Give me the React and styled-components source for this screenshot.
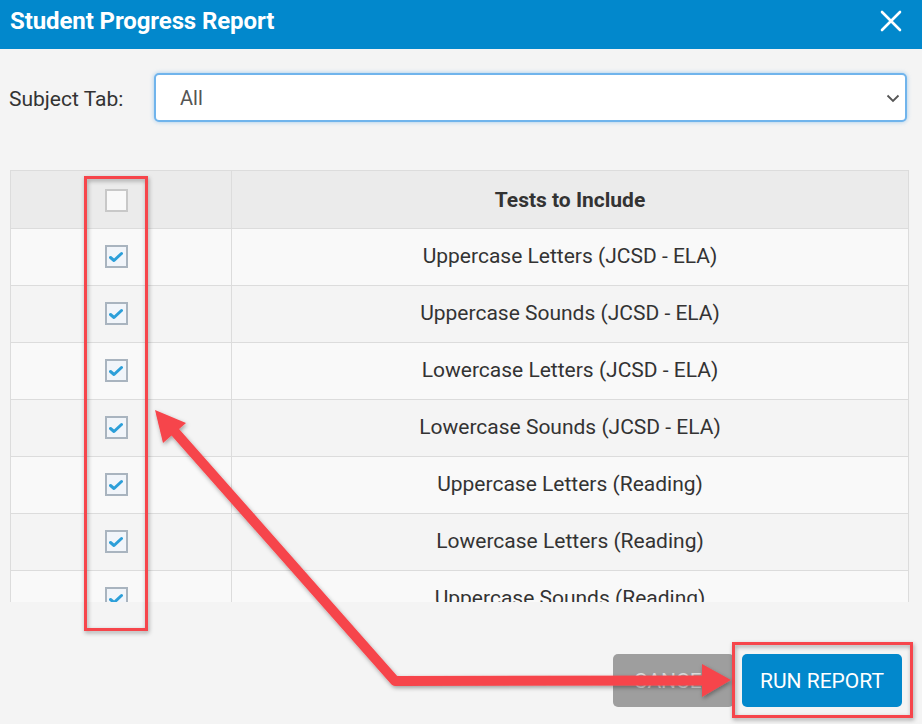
import React, { useState } from "react";
import styled, { createGlobalStyle } from "styled-components";

const GlobalStyle = createGlobalStyle`
  html, body {
    margin: 0;
    padding: 0;
    background: #f4f4f4;
    font-family: Roboto, "Liberation Sans", Arial, sans-serif;
  }
  * { box-sizing: border-box; }
`;

const tests = [
  "Uppercase Letters (JCSD - ELA)",
  "Uppercase Sounds (JCSD - ELA)",
  "Lowercase Letters (JCSD - ELA)",
  "Lowercase Sounds (JCSD - ELA)",
  "Uppercase Letters (Reading)",
  "Lowercase Letters (Reading)",
  "Uppercase Sounds (Reading)",
  "Lowercase Sounds (Reading)",
];

const CheckMark = () => (
  <svg width="14" height="12" viewBox="0 0 14 12">
    <path
      d="M1.5 6.5 L5 9.5 L12.5 2.5"
      fill="none"
      stroke="#2c9fd9"
      strokeWidth="3"
      strokeLinecap="round"
      strokeLinejoin="round"
    />
  </svg>
);

const App = () => {
  const [subject, setSubject] = useState("All");
  const [checked, setChecked] = useState(tests.map(() => true));

  const toggle = (i) => {
    setChecked(checked.map((c, j) => (j === i ? !c : c)));
  };

  return (
    <Page>
      <GlobalStyle />
      <Header>
        <Title>Student Progress Report</Title>
        <CloseButton aria-label="close">
          <svg width="22" height="22" viewBox="0 0 22 22">
            <path
              d="M2 2 L20 20 M20 2 L2 20"
              stroke="#fff"
              strokeWidth="2.6"
              strokeLinecap="round"
            />
          </svg>
        </CloseButton>
      </Header>

      <Body>
        <FilterRow>
          <Label>Subject Tab:</Label>
          <SelectWrap>
            <Select value={subject} onChange={(e) => setSubject(e.target.value)}>
              <option>All</option>
              <option>ELA</option>
              <option>Reading</option>
            </Select>
            <Chevron width="14" height="9" viewBox="0 0 14 9">
              <path
                d="M1.5 1.5 L7 7 L12.5 1.5"
                fill="none"
                stroke="#555"
                strokeWidth="1.8"
              />
            </Chevron>
          </SelectWrap>
        </FilterRow>

        <TableWrap>
          <Table>
            <thead>
              <tr>
                <HeadCell $narrow>
                  <Box $empty />
                </HeadCell>
                <HeadCell>Tests to Include</HeadCell>
              </tr>
            </thead>
            <tbody>
              {tests.map((t, i) => (
                <Row key={t} $odd={i % 2 === 0}>
                  <Cell $narrow>
                    <Box onClick={() => toggle(i)}>{checked[i] && <CheckMark />}</Box>
                  </Cell>
                  <Cell>{t}</Cell>
                </Row>
              ))}
            </tbody>
          </Table>
        </TableWrap>

        <Footer>
          <Button $variant="cancel">CANCEL</Button>
          <Button>RUN REPORT</Button>
        </Footer>
      </Body>

      <Overlay width="922" height="724" viewBox="0 0 922 724">
        <defs>
          <filter id="shadow" x="-10%" y="-10%" width="120%" height="120%">
            <feDropShadow dx="1" dy="2" stdDeviation="2" floodColor="#000" floodOpacity="0.35" />
          </filter>
        </defs>
        <g filter="url(#shadow)" fill="none" stroke="#f6454b" strokeWidth="3">
          <rect x="85.5" y="177.5" width="61" height="452" />
          <rect x="733.5" y="643.5" width="178" height="73" />
        </g>
        <g filter="url(#shadow)">
          <path
            d="M709 680.5 L395 681 L168 424"
            fill="none"
            stroke="#f6454b"
            strokeWidth="10"
            strokeLinecap="round"
            strokeLinejoin="round"
          />
          <polygon points="155,410 186,423 163,443" fill="#f6454b" />
          <polygon points="702,664 731,680 702,697" fill="#f6454b" />
        </g>
      </Overlay>
    </Page>
  );
};

const Page = styled.div`
  position: relative;
  width: 922px;
  height: 724px;
  overflow: hidden;
  background: #f4f4f4;
`;

const Header = styled.header`
  height: 49px;
  background: #0288cc;
  display: flex;
  align-items: center;
  justify-content: space-between;
  padding: 0 20px 0 10px;
`;

const Title = styled.h1`
  margin: 0 0 8px;
  color: #fff;
  font-size: 24px;
  font-weight: 700;
  letter-spacing: -0.1px;
`;

const CloseButton = styled.button`
  border: 0;
  background: none;
  padding: 0;
  margin-bottom: 8px;
  display: flex;
  cursor: pointer;
`;

const Body = styled.main`
  padding: 24px 13px 0 10px;
`;

const FilterRow = styled.div`
  display: flex;
  align-items: center;
`;

const Label = styled.label`
  width: 145px;
  margin-left: -1px;
  font-size: 21px;
  color: #333;
  padding-top: 2px;
`;

const SelectWrap = styled.div`
  position: relative;
  flex: 1;
  margin-right: 2px;
`;

const Select = styled.select`
  appearance: none;
  width: 100%;
  height: 49px;
  padding: 0 24px;
  font-family: inherit;
  font-size: 20px;
  color: #555;
  background: #fff;
  border: 2px solid #70b4ec;
  border-radius: 5px;
  box-shadow: 0 0 4px rgba(102, 175, 233, 0.6);
  outline: none;
`;

const Chevron = styled.svg`
  position: absolute;
  right: 7px;
  top: 21px;
  pointer-events: none;
`;

const TableWrap = styled.div`
  margin-top: 48px;
  height: 432px;
  overflow: hidden;
`;

const Table = styled.table`
  width: 100%;
  border-collapse: collapse;
  border-left: 1px solid #dcdcdc;
  border-right: 1px solid #dcdcdc;
`;

const HeadCell = styled.th`
  height: 58px;
  width: ${(p) => (p.$narrow ? "221px" : "auto")};
  padding: 0 ${(p) => (p.$narrow ? "10px" : "0")} 0 0;
  background: #ebebeb;
  border: 1px solid #dcdcdc;
  font-size: 21px;
  font-weight: 700;
  color: #333;
  text-align: center;
  vertical-align: middle;
`;

const Row = styled.tr`
  background: ${(p) => (p.$odd ? "#f9f9f9" : "#f4f4f4")};
`;

const Cell = styled.td`
  height: 57px;
  padding: 0 ${(p) => (p.$narrow ? "10px" : "0")} 2px 0;
  border: 1px solid #dcdcdc;
  border-top: 0;
  font-size: 21px;
  color: #333;
  text-align: center;
  vertical-align: middle;
`;

const Box = styled.span`
  display: inline-flex;
  align-items: center;
  justify-content: center;
  width: 23px;
  height: 23px;
  vertical-align: middle;
  border: 2px solid ${(p) => (p.$empty ? "#c8c8c8" : "#a9b4bf")};
  background: ${(p) => (p.$empty ? "#f9f9f9" : "#f1f5fa")};
  cursor: pointer;
`;

const Footer = styled.div`
  display: flex;
  justify-content: flex-end;
  gap: 8px;
  margin-top: 52px;
  padding-right: 7px;
`;

const Button = styled.button`
  height: 53px;
  padding: 0 ${(p) => (p.$variant === "cancel" ? "21px" : "18px")};
  min-width: ${(p) => (p.$variant === "cancel" ? "120px" : "160px")};
  border: 0;
  border-radius: 5px;
  font-family: inherit;
  font-size: 21px;
  color: ${(p) => (p.$variant === "cancel" ? "#ddd" : "#fff")};
  background: ${(p) => (p.$variant === "cancel" ? "#9e9e9e" : "#0288cc")};
  cursor: pointer;
`;

const Overlay = styled.svg`
  position: absolute;
  left: 0;
  top: 0;
  pointer-events: none;
`;

export default App;
